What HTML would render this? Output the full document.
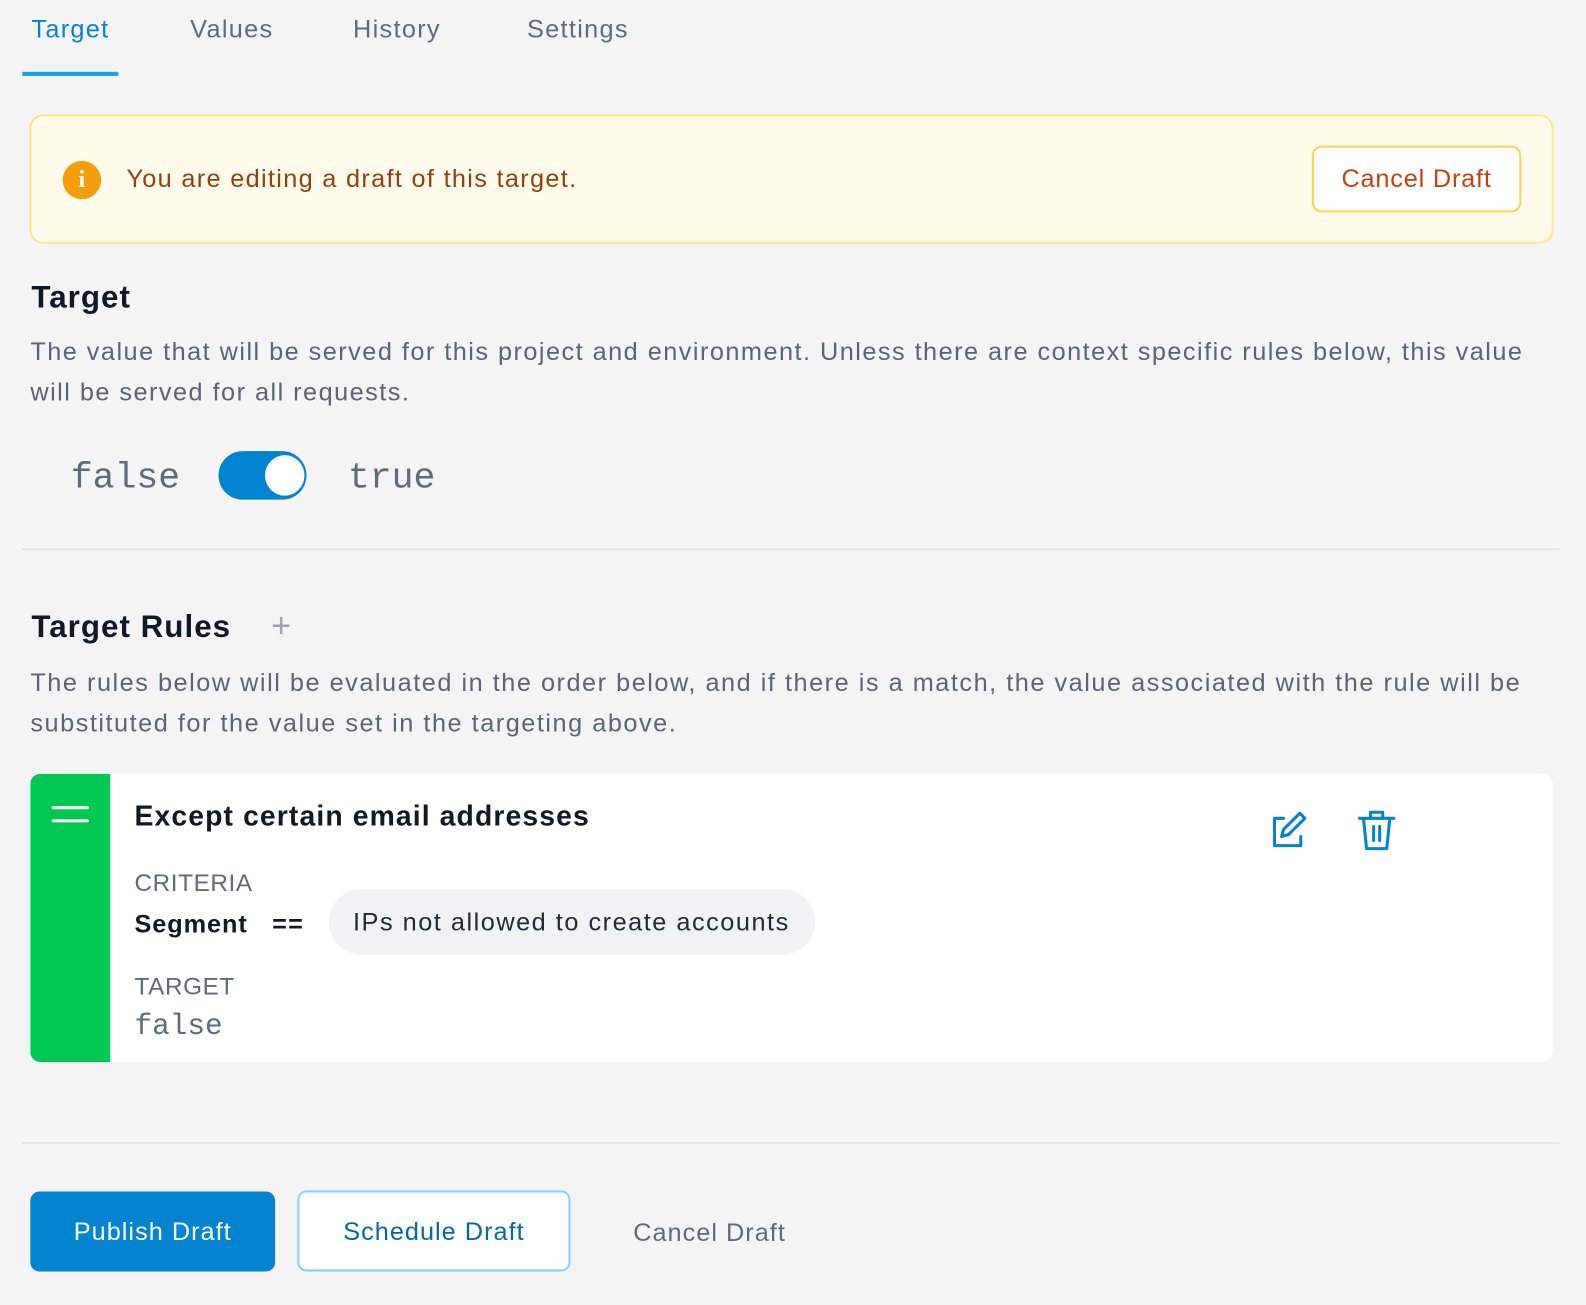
<!DOCTYPE html>
<html><head><meta charset="utf-8"><style>
*{box-sizing:border-box;margin:0;padding:0}
body{width:1586px;height:1304px;background:#f4f4f4;overflow:hidden}
#w{position:relative;width:1568px;height:1290px;transform:scale(1.0115);transform-origin:0 0;font-family:"Liberation Sans",sans-serif;color:#111827;letter-spacing:1.3px}
.abs{position:absolute;white-space:nowrap}
.tab{position:absolute;top:15px;font-size:25px;color:#5f6b7a}
.p{font-size:25px;color:#5a6474;line-height:40px;white-space:normal;letter-spacing:1.45px}
.mono{font-family:"Liberation Mono",monospace;color:#5f6b7a;letter-spacing:0}
</style></head><body><div id="w">
<div class="tab" style="left:31px;color:#0284d0">Target</div>
<div class="tab" style="left:188px">Values</div>
<div class="tab" style="left:349px">History</div>
<div class="tab" style="left:521px">Settings</div>
<div class="abs" style="left:22px;top:71px;width:95px;height:4px;background:#0ea5e9"></div>

<div class="abs" style="left:29px;top:113px;width:1507px;height:128px;background:#fefbea;border:2px solid #fde68a;border-radius:14px"></div>
<div class="abs" style="left:62px;top:159px;width:38px;height:38px;border-radius:50%;background:#f59e0b;color:#fff;font-weight:bold;font-size:24px;text-align:center;line-height:38px;font-family:'Liberation Serif',serif;letter-spacing:0">i</div>
<div class="abs" style="left:125px;top:163px;font-size:25px;color:#92400e;letter-spacing:1.3px">You are editing a draft of this target.</div>
<div class="abs" style="left:1297px;top:144px;width:207px;height:66px;border:2px solid #fcd34d;border-radius:10px;background:#fff;color:#c2410c;font-size:25px;text-align:center;line-height:62px;letter-spacing:0.8px">Cancel Draft</div>

<div class="abs" style="left:31px;top:276px;font-size:31px;font-weight:bold;letter-spacing:1px">Target</div>
<div class="abs p" style="left:30px;top:328px;width:1520px">The value that will be served for this project and environment. Unless there are context specific rules below, this value will be served for all requests.</div>
<div class="abs mono" style="left:70px;top:452px;font-size:36px">false</div>
<div class="abs" style="left:216px;top:446px;width:87px;height:48px;border-radius:24px;background:#0284d0"></div>
<div class="abs" style="left:262px;top:450px;width:39px;height:40px;border-radius:50%;background:#fff"></div>
<div class="abs mono" style="left:344px;top:452px;font-size:36px">true</div>

<div class="abs" style="left:22px;top:542px;width:1520px;height:2px;background:#e5e5e5"></div>

<div class="abs" style="left:31px;top:602px;font-size:31px;font-weight:bold;letter-spacing:1px">Target Rules</div>
<div class="abs" style="left:268px;top:600px;font-size:34px;color:#9ca3af">+</div>
<div class="abs p" style="left:30px;top:655px;width:1520px;letter-spacing:1.5px">The rules below will be evaluated in the order below, and if there is a match, the value associated with the rule will be substituted for the value set in the targeting above.</div>

<div class="abs" style="left:30px;top:765px;width:1505px;height:285px;background:#fff;border-radius:10px;overflow:hidden">
 <div class="abs" style="left:0;top:0;width:79px;height:285px;background:#00c853"></div>
 <div class="abs" style="left:21px;top:32px;width:37px;height:3px;background:#fff;border-radius:2px"></div>
 <div class="abs" style="left:21px;top:45px;width:37px;height:3px;background:#fff;border-radius:2px"></div>
</div>
<div class="abs" style="left:133px;top:791px;font-size:28px;font-weight:bold;letter-spacing:1.1px">Except certain email addresses</div>
<svg class="abs" style="left:1255px;top:800px" width="40" height="40" viewBox="0 0 40 40" fill="none" stroke="#0284d0" stroke-width="3" stroke-linecap="round" stroke-linejoin="round"><path d="M14 9H5v27h26v-9"/><path d="M30 4l5 5-16 16-7 2 2-7z"/></svg>
<svg class="abs" style="left:1342px;top:800px" width="38" height="42" viewBox="0 0 38 42" fill="none" stroke="#0284d0" stroke-width="3" stroke-linecap="round" stroke-linejoin="round"><path d="M2 9h34M13 9V3h12v6M6 9l3 30h20l3-30M16 17v14M22 17v14"/></svg>
<div class="abs" style="left:133px;top:860px;font-size:24px;color:#5f6b7a;letter-spacing:0.6px">CRITERIA</div>
<div class="abs" style="left:133px;top:900px;font-size:25px;font-weight:bold;letter-spacing:0.9px">Segment</div>
<div class="abs" style="left:269px;top:900px;font-size:25px;font-weight:bold">==</div>
<div class="abs" style="left:325px;top:879px;width:481px;height:65px;border-radius:33px;background:#f1f2f3;font-size:25px;line-height:67px;padding-left:24px;color:#1f2937;letter-spacing:1.5px">IPs not allowed to create accounts</div>
<div class="abs" style="left:133px;top:962px;font-size:24px;color:#5f6b7a;letter-spacing:0.6px">TARGET</div>
<div class="abs mono" style="left:133px;top:998px;font-size:29px">false</div>

<div class="abs" style="left:22px;top:1129px;width:1520px;height:2px;background:#e5e5e5"></div>

<div class="abs" style="left:30px;top:1178px;width:242px;height:79px;border-radius:9px;background:#0284d0;color:#fff;font-size:25px;text-align:center;line-height:81px;letter-spacing:1px">Publish Draft</div>
<div class="abs" style="left:294px;top:1177px;width:270px;height:80px;border-radius:9px;background:#fff;border:2px solid #7dd3fc;color:#0369a1;font-size:25px;text-align:center;line-height:78px;letter-spacing:1px">Schedule Draft</div>
<div class="abs" style="left:626px;top:1205px;font-size:25px;color:#5f6b7a;letter-spacing:1px">Cancel Draft</div>
</div></body></html>
